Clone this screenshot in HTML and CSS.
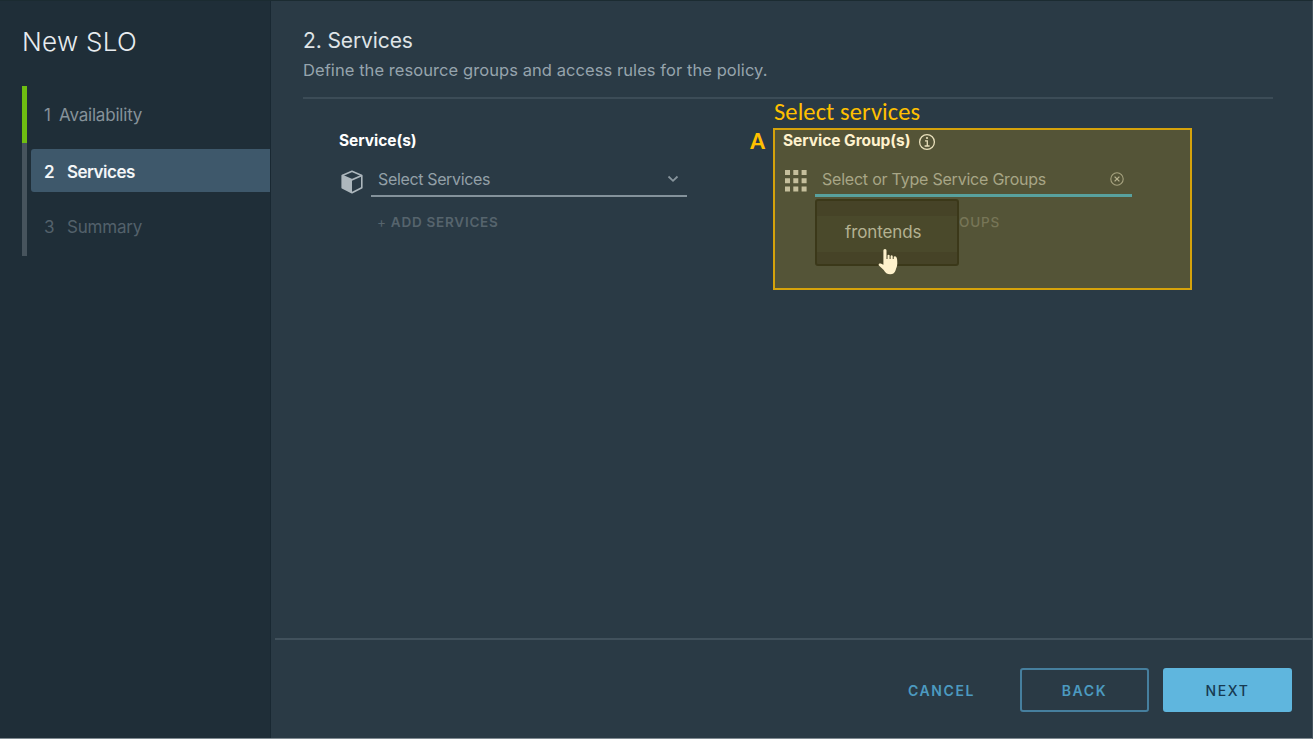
FILE: index.html
```html
<!DOCTYPE html>
<html lang="en">
<head>
<meta charset="utf-8">
<title>New SLO</title>
<link rel="stylesheet" href="styles.css">
</head>
<body>
<div class="wizard">
  <aside class="sidebar">
    <h1 class="title"><span>New SLO</span></h1>
    <ol class="steps">
      <li class="step done"><span class="num">1</span><span class="label">Availability</span></li>
      <li class="step active"><span class="num">2</span><span class="label">Services</span></li>
      <li class="step todo"><span class="num">3</span><span class="label">Summary</span></li>
    </ol>
  </aside>
  <main class="main">
    <section class="content">
      <h2 class="heading"><span>2. Services</span></h2>
      <p class="desc"><span>Define the resource groups and access rules for the policy.</span></p>
      <div class="columns">
        <div class="field">
          <h3 class="field-title"><span>Service(s)</span></h3>
          <div class="row">
            <svg class="cube" viewBox="0 0 22 24"><path d="M11 1.2 20.8 5.4V17.8L11 22.8 1.2 17.8V5.4Z" fill="none" stroke="#adb7bd" stroke-width="1.6" stroke-linejoin="round"/><path d="M1.2 5.6 11 9.8V22.8L1.2 17.8Z" fill="#adb7bd"/><path d="M1.2 5.4 11 9.8 20.8 5.4" fill="none" stroke="#adb7bd" stroke-width="1.6"/></svg>
            <div class="select"><span class="ph">Select Services</span>
              <svg class="chev" viewBox="0 0 12 8"><path d="M1.5 1.5 6 5.8l4.5-4.3" fill="none" stroke="#87949c" stroke-width="1.8"/></svg>
            </div>
          </div>
          <div class="add"><span class="plus">+</span> <span>ADD SERVICES</span></div>
        </div>
        <div class="field">
          <h3 class="field-title group"><span>Service Group(s)</span>
            <svg class="info" viewBox="0 0 18 18"><circle cx="9" cy="9" r="7.4" fill="none" stroke="#e3e8ea" stroke-width="1.3"/><circle cx="9" cy="5" r="1.1" fill="#e3e8ea"/><path d="M7 7.8h2.3v5M6.6 13h5" fill="none" stroke="#e3e8ea" stroke-width="1.3"/></svg>
          </h3>
          <div class="row">
            <svg class="grid" viewBox="0 0 22 22" fill="#b7c0c4"><path d="M0 0h5v5H0zM8.3 0h5v5h-5zM16.6 0h5v5h-5zM0 8.2h5v5H0zM8.3 8.2h5v5h-5zM16.6 8.2h5v5h-5zM0 16.4h5v5H0zM8.3 16.4h5v5h-5zM16.6 16.4h5v5h-5z"/></svg>
            <div class="select focus"><span class="ph">Select or Type Service Groups</span>
              <svg class="clear" viewBox="0 0 14 14"><circle cx="7" cy="7" r="6.2" fill="none" stroke="#909c9f" stroke-width="1.1"/><path d="m4.6 4.6 4.8 4.8m0-4.8L4.6 9.4" stroke="#a5afb2" stroke-width="1.3"/></svg>
              <div class="menu"><div class="option"><span>frontends</span></div></div>
            </div>
          </div>
          <div class="add clipped"><span>OUPS</span></div>
        </div>
      </div>
    </section>
    <footer class="footer">
      <button class="btn link"><span>CANCEL</span></button>
      <button class="btn outline"><span>BACK</span></button>
      <button class="btn primary"><span>NEXT</span></button>
    </footer>
  </main>
  <svg class="cursor" viewBox="0 0 20 27"><path d="M7 1c1 0 1.500.7 1.500 1.800V11h1V7.300c.4-.8 1.700-.8 2.100 0V11h1V7.900c.4-.8 1.700-.8 2.100 0V11h1V8.800c.5-.8 2-.8 2.600.2.9 1.300 1 3.500 1 6.500 0 3-1.200 4.500-1.600 6.500-.7 2.800-2.700 4.300-5.500 4.300-3.100 0-5-1.500-6.500-4.300L.9 17.500c-.8-1.400.4-2.400 1.900-2l2.600 1.300V2.800C5.400 1.700 6 1 7 1Z" fill="#fff"/></svg>
  <div class="highlight"></div>
  <div class="caption"><span>Select services</span></div>
  <div class="marker"><span>A</span></div>
</div>
</body>
</html>
```
FILE: styles.css
```css
* { box-sizing: border-box; margin: 0; padding: 0; }
body { background: #fff; font-family: Inter, "Open Sans", sans-serif; }
span { white-space: nowrap; }
.wizard { position: relative; display: flex; width: 1313px; height: 739px; background: #2a3a45; border-top: 1px solid #1b2b31; border-right: 1px solid #44535c; border-bottom: 1px solid #7f8a91; overflow: hidden; }
.sidebar { width: 271px; background: #1f2e38; border-right: 1px solid #192832; padding: 21px 0 0 22px; }
.title { height: 40px; line-height: 40px; font-size: 26px; font-weight: 300; color: #e8ecef; letter-spacing: .3px; }
.steps { list-style: none; margin-top: 24px; height: 170px; display: flex; flex-direction: column; position: relative; border-left: 5px solid #47545d; }
.step { display: flex; align-items: center; height: 43px; margin-left: 4px; padding-left: 13px; font-size: 17px; letter-spacing: -.2px; }
.num { width: 23px; }
.step.done { height: 57px; margin-left: -5px; border-left: 5px solid #6fbe12; padding-left: 17px; color: #86929a; }
.step.done .num { width: 15px; }
.step.active { margin-top: 6px; padding-top: 2px; background: #3e586b; border-radius: 3px 0 0 3px; color: #f3f6f8; font-weight: 600; letter-spacing: -.5px; }
.step.todo { margin-top: 13px; color: #53616b; }
.main { flex: 1; display: flex; flex-direction: column; }
.content { flex: 1; padding: 25px 39px 0 32px; }
.heading { height: 29px; line-height: 29px; font-size: 21px; font-weight: 400; letter-spacing: -.1px; color: #dfe4e7; }
.desc { height: 44px; line-height: 31px; font-size: 16.5px; letter-spacing: .07px; color: #96a4ad; border-bottom: 2px solid #3c4c57; }
.columns { display: grid; grid-template-columns: 444px 1fr; padding: 31px 0 0 36px; }
.field-title { display: flex; align-items: center; height: 20px; font-size: 15.5px; font-weight: 700; letter-spacing: -.05px; color: #fff; }
.info { width: 18px; height: 18px; margin: 3px 0 0 7px; }
.row { display: flex; margin-top: 13px; height: 34px; }
.cube { width: 22px; height: 24px; margin: 7px 8px 0 2px; }
.grid { width: 22px; height: 22px; margin: 7px 8px 0 2px; }
.select { position: relative; display: flex; align-items: center; justify-content: space-between; width: 316px; height: 34px; padding: 0 8px 0 7px; border-bottom: 2px solid #84929b; font-size: 16px; letter-spacing: -.35px; color: #93a0a8; }
.select.focus { width: 317px; border-bottom: 3px solid #2f9ac6; letter-spacing: -.22px; }
.chev { width: 12px; height: 8px; }
.clear { width: 14px; height: 14px; }
.add { margin: 15px 0 0 38px; height: 20px; line-height: 20px; font-size: 13.5px; font-weight: 600; letter-spacing: .75px; color: #56646d; }
.plus { font-weight: 400; }
.add.clipped { margin-left: 176px; font-weight: 500; letter-spacing: .8px; }
.menu { position: absolute; z-index: 2; left: 0; top: 36px; width: 144px; height: 67px; padding-top: 15px; background: #182531; border: 2px solid #0b1720; border-radius: 3px; }
.option { height: 36px; line-height: 33px; padding-left: 28px; background: #1d2c36; font-size: 17px; letter-spacing: -.1px; color: #a2afb6; }
.footer { display: flex; align-items: center; justify-content: flex-end; height: 100px; margin-left: 4px; padding: 2px 20px 0 0; border-top: 2px solid #41515c; }
.btn { width: 129px; height: 44px; margin-left: 14px; background: none; border: 2px solid transparent; border-radius: 3px; font-family: inherit; font-size: 14px; font-weight: 600; letter-spacing: 1.6px; color: #4c9ac0; }
.outline { border-color: #467f9e; }
.primary { background: #5fb6de; border-color: #5fb6de; color: #173a52; font-weight: 500; }
.cursor { position: absolute; z-index: 3; left: 878px; top: 247px; width: 20px; height: 27px; }
.highlight { position: absolute; z-index: 4; left: 773px; top: 127px; width: 419px; height: 162px; background: rgba(255,192,0,.2); border: 2px solid #d5a20b; }
.caption { position: absolute; left: 774px; top: 97px; font: 24.5px/28px Carlito, Lato, sans-serif; letter-spacing: .1px; color: #ffc000; }
.marker { position: absolute; left: 750px; top: 125px; font: 900 25px/30px Carlito, Lato, sans-serif; color: #ffc000; }
```
